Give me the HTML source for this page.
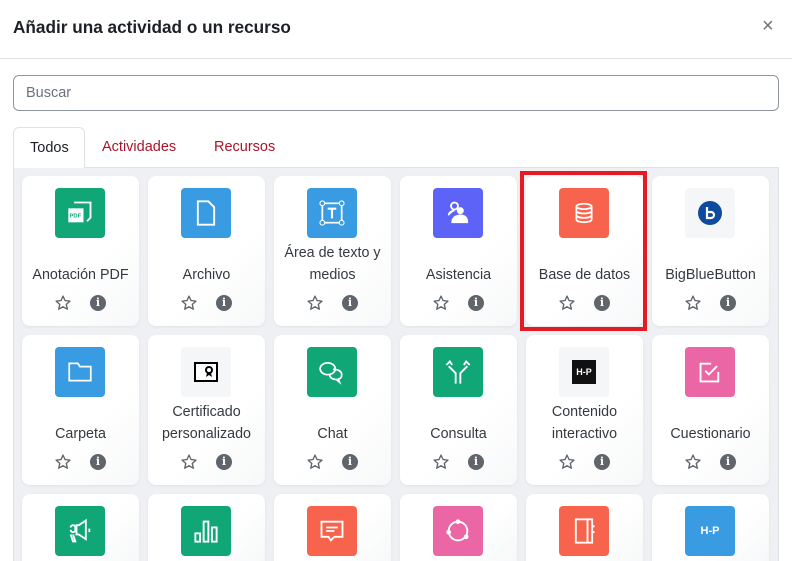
<!DOCTYPE html>
<html><head><meta charset="utf-8"><style>
*{box-sizing:border-box;margin:0;padding:0}
html,body{width:792px;height:561px;overflow:hidden}
body{background:#fff;font-family:"Liberation Sans",sans-serif;color:#1d2125;position:relative}
#wrap{position:absolute;left:0;top:0;width:792px;height:561px;overflow:hidden}
.t{position:absolute;left:13px;top:17px;font-size:17.2px;font-weight:bold;color:#1d2125}
.x{position:absolute;left:762px;top:15px;font-size:20px;color:#6a737b}
.hr{position:absolute;left:0;top:58px;width:792px;height:1px;background:#dee2e6}
.s{position:absolute;left:13px;top:75px;width:766px;height:36px;border:1px solid #8f959e;border-radius:6px;font-size:14.5px;color:#6a737b;padding:9px 12px}
.tab{position:absolute;top:139px;font-size:14.5px;color:#a8152a}
.tab0{position:absolute;left:13px;top:127px;width:72px;height:41px;border:1px solid #dee2e6;border-bottom:none;border-radius:6px 6px 0 0;background:#fff;font-size:14.5px;color:#1d2125;padding:12px 0 0 16px;z-index:2}
.area{position:absolute;left:13px;top:167px;width:766px;height:394px;background:#eef0f3;border:1px solid #dee2e6;border-bottom:none}
.c{position:absolute;width:117px;height:150px;border-radius:8px;background:linear-gradient(135deg,#fff 60%,#f7f8f9);box-shadow:0 1px 3px rgba(0,0,0,.06)}
.ic{position:absolute;left:33px;top:12px;width:50px;height:50px;border-radius:4px;display:flex;align-items:center;justify-content:center}
.l{position:absolute;left:0;width:117px;text-align:center;font-size:14.3px;color:#343a40;line-height:22px}
.st{position:absolute;left:32px;top:118px;width:18px;height:18px}
.in{position:absolute;left:68px;top:119px;width:16px;height:16px;border-radius:50%;background:#5f656b;color:#fff;font-size:11px;font-weight:bold;text-align:center;line-height:16px;font-family:"DejaVu Serif",serif}
.red{position:absolute;left:520px;top:171px;width:127px;height:160px;border:4px solid #e41b23;z-index:5}
</style></head><body><div id="wrap">
<div class="t">Añadir una actividad o un recurso</div>
<div class="x">×</div>
<div class="hr"></div>
<div class="s">Buscar</div>
<div class="tab0">Todos</div>
<div class="tab" style="left:102px">Actividades</div>
<div class="tab" style="left:214px">Recursos</div>
<div class="area"></div>
<div class="red"></div>
<div id="g"></div>
</div>
<script>
var S='<svg class="st" viewBox="0 0 24 24"><path d="M12 2.8l2.8 6 6.5.7-4.9 4.4 1.4 6.4L12 17l-5.7 3.3 1.4-6.4-4.9-4.4 6.5-.7z" fill="none" stroke="#5f656b" stroke-width="1.8" stroke-linejoin="round"/></svg><div class="in">i</div>';
var w='stroke="#fff" fill="none" stroke-width="1.6"';
var cards=[
['#11a676','<svg width="28" height="28" viewBox="0 0 24 24"><path d="M7 3h14v13l-3 3" '+w+'/><rect x="2" y="8" width="13" height="12" fill="#fff"/><text x="3" y="16" font-size="5" font-weight="bold" fill="#11a676" font-family="Liberation Sans">PDF</text></svg>',['Anotación PDF']],
['#399be2','<svg width="28" height="28" viewBox="0 0 24 24"><path d="M5 2h9l5 5v15H5z" '+w+'/></svg>',['Archivo']],
['#399be2','<svg width="28" height="28" viewBox="0 0 26 26"><rect x="4" y="4" width="18" height="18" '+w+'/><circle cx="4" cy="4" r="2.2" fill="#399be2" stroke="#fff"/><circle cx="22" cy="4" r="2.2" fill="#399be2" stroke="#fff"/><circle cx="4" cy="22" r="2.2" fill="#399be2" stroke="#fff"/><circle cx="22" cy="22" r="2.2" fill="#399be2" stroke="#fff"/><path d="M9 9h8M13 9v9" stroke="#fff" stroke-width="2"/></svg>',['Área de texto y','medios']],
['#5d63f6','<svg width="28" height="28" viewBox="0 0 24 24"><circle cx="9" cy="6" r="3" '+w+'/><circle cx="14" cy="10" r="3" fill="#fff"/><path d="M4 14c0-3 3-4 5-4M7 20c0-4 3-6 7-6s6 2 6 6z" stroke="#fff" fill="#fff" stroke-width="1.4"/></svg>',['Asistencia']],
['#f7634d','<svg width="24" height="24" viewBox="0 0 22 22"><ellipse cx="11" cy="5" rx="7" ry="2.5" '+w+'/><path d="M4 5v12c0 1.4 3 2.5 7 2.5s7-1.1 7-2.5V5M4 9c0 1.4 3 2.5 7 2.5s7-1.1 7-2.5M4 13c0 1.4 3 2.5 7 2.5s7-1.1 7-2.5" '+w+'/></svg>',['Base de datos']],
['#f5f6f8','<svg width="24" height="24"><circle cx="12" cy="12" r="12" fill="#0e4a9e"/><path d="M9 6v11h4a3 3 0 000-6H9" stroke="#fff" stroke-width="2.2" fill="none"/></svg>',['BigBlueButton']],
['#399be2','<svg width="28" height="26" viewBox="0 0 26 24"><path d="M3 4h8l2 3h10v13H3z" '+w+'/></svg>',['Carpeta']],
['#f5f6f8','<svg width="24" height="20"><rect x="1" y="1" width="22" height="18" fill="#fff" stroke="#000" stroke-width="2"/><circle cx="15" cy="8" r="3" fill="none" stroke="#000" stroke-width="2"/><path d="M13 11l-1 4 3-2 3 2-1-4" fill="#000"/></svg>',['Certificado','personalizado']],
['#11a676','<svg width="28" height="26" viewBox="0 0 26 24"><ellipse cx="9" cy="9" rx="7" ry="5.5" '+w+'/><path d="M14 9.5c5 0 8 2 8 5s-2 4-3 4l1 3-3-2.5c-3 0-6-1.5-6-4" '+w+'/></svg>',['Chat']],
['#11a676','<svg width="28" height="28" viewBox="0 0 24 24"><path d="M10 22V13L4 7M14 22V13l6-6M2 6l3-3 2 3M22 6l-3-3-2 3" '+w+'/></svg>',['Consulta']],
['#f5f6f8','<div style="width:24px;height:24px;background:#111;color:#fff;font-size:9px;font-weight:bold;line-height:24px;text-align:center">H-P</div>',['Contenido','interactivo']],
['#ea66a4','<svg width="26" height="26" viewBox="0 0 22 22"><path d="M18 11v8H3V4h9" '+w+'/><path d="M7 10l3 3 7-7" '+w+'/></svg>',['Cuestionario']],
['#11a676','<svg width="28" height="28" viewBox="0 0 24 24"><path d="M9 7h2l6-4v16l-6-4H9zM4 9a2 2 0 014 0v2a2 2 0 01-4 0M6 15l2 6h-2l-2-6M20 10v3" '+w+'/></svg>',[]],
['#11a676','<svg width="26" height="26" viewBox="0 0 22 22"><rect x="2" y="13" width="4" height="7" '+w+'/><rect x="9" y="3" width="4" height="17" '+w+'/><rect x="16" y="8" width="4" height="12" '+w+'/></svg>',[]],
['#f7634d','<svg width="28" height="28" viewBox="0 0 24 24"><path d="M3 4h18v13h-7l-3 3-2-3H3z" '+w+'/><path d="M7 9h10M7 12h7" '+w+'/></svg>',[]],
['#ea66a4','<svg width="28" height="28" viewBox="0 0 24 24"><circle cx="12" cy="12" r="8" '+w+'/><circle cx="12" cy="4" r="2" fill="#fff"/><circle cx="4" cy="13" r="2" fill="#fff"/><circle cx="19" cy="17" r="2" fill="#fff"/></svg>',[]],
['#f7634d','<svg width="26" height="28" viewBox="0 0 22 24"><rect x="4" y="2" width="14" height="20" '+w+'/><path d="M14 2v20M18 8h2M18 13h2" '+w+'/></svg>',[]],
['#399be2','<div style="color:#fff;font-size:11px;font-weight:bold">H-P</div>',[]]
];
var h='';
cards.forEach(function(c,i){
 var col=i%6,row=Math.floor(i/6);
 var x=22+col*126,y=176+row*159;
 var lab='';
 if(c[2].length==1)lab='<div class="l" style="top:88px">'+c[2][0]+'</div>';
 else if(c[2].length==2)lab='<div class="l" style="top:66px">'+c[2][0]+'<br>'+c[2][1]+'</div>';
 h+='<div class="c" style="left:'+x+'px;top:'+y+'px'+(row==2?';height:67px;border-radius:8px 8px 0 0':'')+'"><div class="ic" style="background:'+c[0]+'">'+c[1]+'</div>'+lab+(c[2].length?S:'')+'</div>';
});
document.getElementById('g').innerHTML=h;
</script>
</body></html>
